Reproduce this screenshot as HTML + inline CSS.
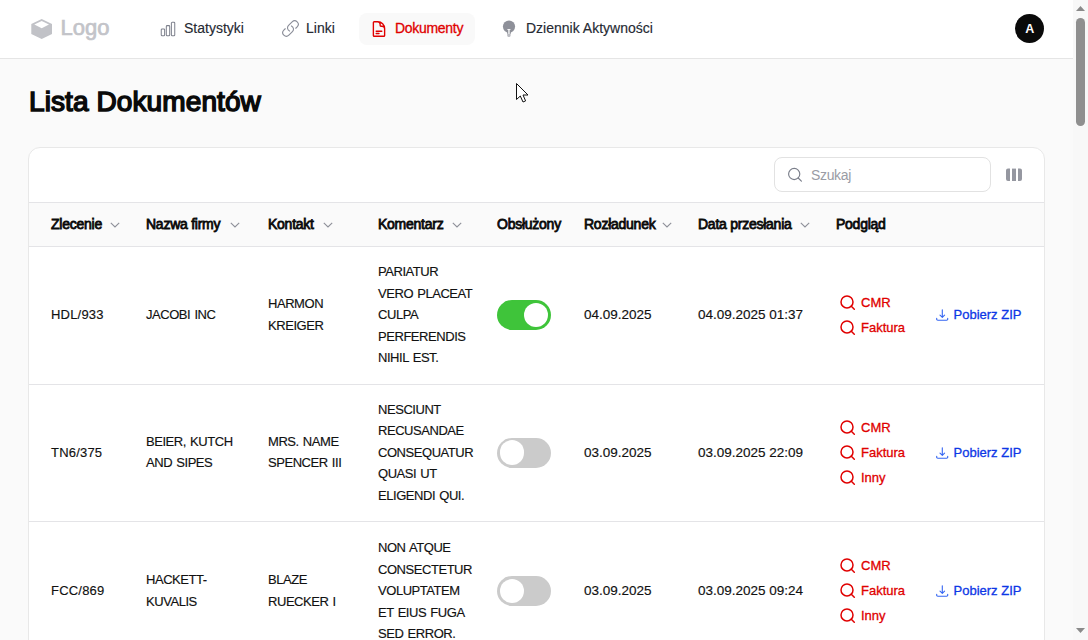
<!DOCTYPE html>
<html><head><meta charset="utf-8">
<style>
*{box-sizing:border-box;margin:0;padding:0}
html,body{width:1088px;height:640px;overflow:hidden}
body{background:#fafafa;font-family:"Liberation Sans",sans-serif;color:#0a0a0a;position:relative}
.a{position:absolute;white-space:nowrap}
.hdr{left:0;top:0;width:1073px;height:59px;background:#fff;border-bottom:1px solid #e5e5e5}
.nav{font-size:14px;line-height:16px;color:#262a33;top:20.4px;-webkit-text-stroke:0.15px #262a33}
.title{font-size:28px;font-weight:400;letter-spacing:0.1px;-webkit-text-stroke:1.5px #0a0a0a;line-height:32px;color:#0a0a0a}
.card{left:28px;top:147px;width:1017px;height:520px;background:#fff;border:1px solid #e8e8e8;border-radius:12px}
.thead{left:29px;top:202px;width:1015px;height:45px;background:#fafafa;border-top:1px solid #e4e4e7;border-bottom:1px solid #e4e4e7}
.rowb{left:29px;width:1015px;height:1px;background:#e4e4e7}
.th{font-size:14px;font-weight:400;letter-spacing:-0.25px;-webkit-text-stroke:0.8px #0a0a0a;line-height:16px;top:216px;color:#0a0a0a}
.td{font-size:13px;line-height:21.6px;color:#111;-webkit-text-stroke:0.15px #111}
.dg{letter-spacing:0.2px}
.dt{font-size:13.5px}
.up{letter-spacing:-0.45px;word-spacing:1px}
.chev{position:absolute;width:10px;height:6px}
.red{color:#e00000;font-size:13px;font-weight:400;-webkit-text-stroke:0.3px #e00000;line-height:16px}
.blue{color:#0d37e6;font-size:13px;line-height:16px;-webkit-text-stroke:0.3px #0d37e6}
.tog{position:absolute;width:54px;height:30px;border-radius:15px}
.tog .k{position:absolute;top:2.7px;width:24.6px;height:24.6px;border-radius:50%;background:#fff}
</style></head>
<body>
<!-- header -->
<div class="a hdr"></div>
<svg class="a" style="left:30px;top:17.6px" width="24" height="22" viewBox="0 0 24 22">
  <path d="M11.7 1 L22 6 L22 16 L11.7 21 L1.3 16 L1.3 6 Z" fill="#c1c2c7"/>
  <path d="M11.7 3 L19 6.6 L11.7 10.2 L4.3 6.6 Z" fill="#fff"/>
</svg>
<div class="a" style="left:60.5px;top:16px;font-size:22px;line-height:24px;font-weight:400;color:#c3c4c9;-webkit-text-stroke:0.7px #c3c4c9">Logo</div>

<svg class="a" style="left:159.2px;top:19.6px" width="18" height="18" viewBox="0 0 24 24" fill="none" stroke="#7d808c" stroke-width="1.35"><path d="M3 13.125C3 12.504 3.504 12 4.125 12h2.25c.621 0 1.125.504 1.125 1.125v6.75C7.5 20.496 6.996 21 6.375 21h-2.25A1.125 1.125 0 0 1 3 19.875v-6.75ZM9.75 8.625c0-.621.504-1.125 1.125-1.125h2.25c.621 0 1.125.504 1.125 1.125v11.25c0 .621-.504 1.125-1.125 1.125h-2.25a1.125 1.125 0 0 1-1.125-1.125V8.625ZM16.5 4.125c0-.621.504-1.125 1.125-1.125h2.25C20.496 3 21 3.504 21 4.125v15.75c0 .621-.504 1.125-1.125 1.125h-2.25a1.125 1.125 0 0 1-1.125-1.125V4.125Z"/></svg>
<div class="a nav" style="left:184px">Statystyki</div>

<svg class="a" style="left:280.6px;top:19.4px" width="19" height="19" viewBox="0 0 24 24" fill="none" stroke="#8a8d98" stroke-width="1.4" stroke-linecap="round" stroke-linejoin="round"><path d="M13.19 8.688a4.5 4.5 0 0 1 1.242 7.244l-4.5 4.5a4.5 4.5 0 0 1-6.364-6.364l1.757-1.757m13.35-.622 1.757-1.757a4.5 4.5 0 0 0-6.364-6.364l-4.5 4.5a4.5 4.5 0 0 0 1.242 7.244"/></svg>
<div class="a nav" style="left:306px">Linki</div>

<div class="a" style="left:359px;top:13px;width:116px;height:32px;border-radius:8px;background:#f9f9f9"></div>
<svg class="a" style="left:370px;top:19.7px" width="18" height="18" viewBox="0 0 24 24" fill="none" stroke="#e00000" stroke-width="1.85" stroke-linecap="round" stroke-linejoin="round"><path d="M19.5 14.25v-2.625a3.375 3.375 0 0 0-3.375-3.375h-1.5A1.125 1.125 0 0 1 13.5 7.125v-1.5a3.375 3.375 0 0 0-3.375-3.375H8.25m0 12.75h7.5m-7.5 3H12M10.5 2.25H5.625c-.621 0-1.125.504-1.125 1.125v17.25c0 .621.504 1.125 1.125 1.125h12.75c.621 0 1.125-.504 1.125-1.125V11.25a9 9 0 0 0-9-9Z"/></svg>
<div class="a nav" style="left:395px;color:#e00000;-webkit-text-stroke:0.3px #e00000;letter-spacing:-0.3px">Dokumenty</div>

<svg class="a" style="left:501px;top:19px" width="16" height="20" viewBox="0 0 16 20">
  <circle cx="8" cy="7.6" r="6.1" fill="#8e9099"/>
  <path d="M5.4 10 H10.6 L9.6 15 H6.4 Z" fill="#8e9099"/>
  <path d="M6.2 15 H9.6 V16.6 a1.3 1.3 0 0 1 -1.3 1.3 H7.5 a1.3 1.3 0 0 1 -1.3 -1.3 Z" fill="#b9bac0"/>
  <rect x="7.3" y="10.2" width="1.3" height="4.8" fill="#fff"/>
  <rect x="6.2" y="9.9" width="3.4" height="0.9" rx="0.4" fill="#fff"/>
</svg>
<div class="a nav" style="left:526px">Dziennik Aktywności</div>

<div class="a" style="left:1015px;top:14px;width:29px;height:29px;border-radius:50%;background:#0a0a0a;color:#fff;font-size:12.5px;font-weight:700;line-height:31px;text-align:center;padding-left:0.5px">A</div>

<!-- title -->
<div class="a title" style="left:29px;top:86px">Lista Dokumentów</div>

<!-- cursor -->
<svg class="a" style="left:515px;top:82px;z-index:5" width="16" height="22" viewBox="0 0 16 22">
  <path d="M1.5 1.5 V17.5 L5.3 14 L8 20 L10.6 18.9 L8 13 H13 Z" fill="#fff" stroke="#111" stroke-width="1" stroke-linejoin="round"/>
</svg>

<!-- card -->
<div class="a card"></div>
<div class="a" style="left:774px;top:157px;width:217px;height:35px;border:1px solid #e2e2e2;border-radius:8px;background:#fff"></div>
<svg class="a" style="left:785px;top:165px" width="20" height="20" viewBox="0 0 20 20" fill="none" stroke="#7a7e8a" stroke-width="1.15" stroke-linecap="round">
  <circle cx="9.2" cy="9" r="5.6"/>
  <path d="M13.2 13 L16.4 16.2"/>
</svg>
<div class="a" style="left:811px;top:166.6px;font-size:14px;line-height:16px;color:#9a9ca5;letter-spacing:-0.35px">Szukaj</div>
<svg class="a" style="left:1005px;top:168.4px" width="18" height="14" viewBox="0 0 18 14" fill="#9597a0">
  <path d="M1 2.6 a2 2 0 0 1 2 -2 H5 V13 H3 a2 2 0 0 1 -2 -2 Z"/>
  <rect x="7" y="0.6" width="4" height="12.4"/>
  <path d="M13 0.6 H15 a2 2 0 0 1 2 2 V11 a2 2 0 0 1 -2 2 H13 Z"/>
</svg>

<div class="a thead"></div>
<div class="a th" style="left:51px">Zlecenie</div>
<div class="a th" style="left:146px">Nazwa firmy</div>
<div class="a th" style="left:268px">Kontakt</div>
<div class="a th" style="left:378px">Komentarz</div>
<div class="a th" style="left:497px">Obsłużony</div>
<div class="a th" style="left:584px">Rozładunek</div>
<div class="a th" style="left:698px">Data przesłania</div>
<div class="a th" style="left:836px">Podgląd</div>
<svg class="chev" style="left:110px;top:222px" viewBox="0 0 10 6" fill="none" stroke="#8e9099" stroke-width="1.1"><path d="M0.8 0.8 L5 5 L9.2 0.8"/></svg>
<svg class="chev" style="left:230px;top:222px" viewBox="0 0 10 6" fill="none" stroke="#8e9099" stroke-width="1.1"><path d="M0.8 0.8 L5 5 L9.2 0.8"/></svg>
<svg class="chev" style="left:323px;top:222px" viewBox="0 0 10 6" fill="none" stroke="#8e9099" stroke-width="1.1"><path d="M0.8 0.8 L5 5 L9.2 0.8"/></svg>
<svg class="chev" style="left:452px;top:222px" viewBox="0 0 10 6" fill="none" stroke="#8e9099" stroke-width="1.1"><path d="M0.8 0.8 L5 5 L9.2 0.8"/></svg>
<svg class="chev" style="left:662px;top:222px" viewBox="0 0 10 6" fill="none" stroke="#8e9099" stroke-width="1.1"><path d="M0.8 0.8 L5 5 L9.2 0.8"/></svg>
<svg class="chev" style="left:800px;top:222px" viewBox="0 0 10 6" fill="none" stroke="#8e9099" stroke-width="1.1"><path d="M0.8 0.8 L5 5 L9.2 0.8"/></svg>

<div class="a rowb" style="top:384px"></div>
<div class="a rowb" style="top:521px"></div>

<!-- ROWS (generated below) -->
<div class="a td dg" style="left:51px;top:304.20px">HDL/933</div>
<div class="a td up" style="left:146px;top:304.20px">JACOBI INC</div>
<div class="a td up" style="left:268px;top:293.40px">HARMON<br>KREIGER</div>
<div class="a td up" style="left:378px;top:261.00px">PARIATUR<br>VERO PLACEAT<br>CULPA<br>PERFERENDIS<br>NIHIL EST.</div>
<div class="tog" style="left:497px;top:300.00px;background:#3fc43a"><div class="k" style="left:26.6px"></div></div>
<div class="a td dt" style="left:584px;top:304.20px">04.09.2025</div>
<div class="a td dt" style="left:698px;top:304.20px">04.09.2025 01:37</div>
<svg class="a" style="left:839px;top:293.50px" width="18" height="18" viewBox="0 0 18 18" fill="none" stroke="#e00000" stroke-width="1.5" stroke-linecap="round"><circle cx="8" cy="7.9" r="6.0"/><path d="M12.3 12.2 L15.3 15.2"/></svg>
<div class="a red" style="left:861px;top:294.50px">CMR</div>
<svg class="a" style="left:839px;top:318.50px" width="18" height="18" viewBox="0 0 18 18" fill="none" stroke="#e00000" stroke-width="1.5" stroke-linecap="round"><circle cx="8" cy="7.9" r="6.0"/><path d="M12.3 12.2 L15.3 15.2"/></svg>
<div class="a red" style="left:861px;top:319.50px">Faktura</div>
<svg class="a" style="left:934px;top:306.40px" width="16" height="16" viewBox="0 0 16 16" fill="none" stroke="#3566f2" stroke-width="1.1" stroke-linecap="round" stroke-linejoin="round"><path d="M8.3 3.8 V11.2 M6.0 9.2 L8.3 11.3 L10.6 9.2 M2.7 12.2 V13.2 a1.1 1.1 0 0 0 1.1 1.1 H12.6 a1.1 1.1 0 0 0 1.1 -1.1 V12.2"/></svg>
<div class="a blue" style="left:953.5px;top:307.00px">Pobierz ZIP</div>
<div class="a td dg" style="left:51px;top:441.70px">TN6/375</div>
<div class="a td up" style="left:146px;top:430.90px">BEIER, KUTCH<br>AND SIPES</div>
<div class="a td up" style="left:268px;top:430.90px">MRS. NAME<br>SPENCER III</div>
<div class="a td up" style="left:378px;top:398.50px">NESCIUNT<br>RECUSANDAE<br>CONSEQUATUR<br>QUASI UT<br>ELIGENDI QUI.</div>
<div class="tog" style="left:497px;top:437.50px;background:#cbcbcb"><div class="k" style="left:2.8px"></div></div>
<div class="a td dt" style="left:584px;top:441.70px">03.09.2025</div>
<div class="a td dt" style="left:698px;top:441.70px">03.09.2025 22:09</div>
<svg class="a" style="left:839px;top:418.50px" width="18" height="18" viewBox="0 0 18 18" fill="none" stroke="#e00000" stroke-width="1.5" stroke-linecap="round"><circle cx="8" cy="7.9" r="6.0"/><path d="M12.3 12.2 L15.3 15.2"/></svg>
<div class="a red" style="left:861px;top:419.50px">CMR</div>
<svg class="a" style="left:839px;top:443.50px" width="18" height="18" viewBox="0 0 18 18" fill="none" stroke="#e00000" stroke-width="1.5" stroke-linecap="round"><circle cx="8" cy="7.9" r="6.0"/><path d="M12.3 12.2 L15.3 15.2"/></svg>
<div class="a red" style="left:861px;top:444.50px">Faktura</div>
<svg class="a" style="left:839px;top:468.50px" width="18" height="18" viewBox="0 0 18 18" fill="none" stroke="#e00000" stroke-width="1.5" stroke-linecap="round"><circle cx="8" cy="7.9" r="6.0"/><path d="M12.3 12.2 L15.3 15.2"/></svg>
<div class="a red" style="left:861px;top:469.50px">Inny</div>
<svg class="a" style="left:934px;top:443.90px" width="16" height="16" viewBox="0 0 16 16" fill="none" stroke="#3566f2" stroke-width="1.1" stroke-linecap="round" stroke-linejoin="round"><path d="M8.3 3.8 V11.2 M6.0 9.2 L8.3 11.3 L10.6 9.2 M2.7 12.2 V13.2 a1.1 1.1 0 0 0 1.1 1.1 H12.6 a1.1 1.1 0 0 0 1.1 -1.1 V12.2"/></svg>
<div class="a blue" style="left:953.5px;top:444.50px">Pobierz ZIP</div>
<div class="a td dg" style="left:51px;top:580.20px">FCC/869</div>
<div class="a td up" style="left:146px;top:569.40px">HACKETT-<br>KUVALIS</div>
<div class="a td up" style="left:268px;top:569.40px">BLAZE<br>RUECKER I</div>
<div class="a td up" style="left:378px;top:537.00px">NON ATQUE<br>CONSECTETUR<br>VOLUPTATEM<br>ET EIUS FUGA<br>SED ERROR.</div>
<div class="tog" style="left:497px;top:576.00px;background:#cbcbcb"><div class="k" style="left:2.8px"></div></div>
<div class="a td dt" style="left:584px;top:580.20px">03.09.2025</div>
<div class="a td dt" style="left:698px;top:580.20px">03.09.2025 09:24</div>
<svg class="a" style="left:839px;top:557.00px" width="18" height="18" viewBox="0 0 18 18" fill="none" stroke="#e00000" stroke-width="1.5" stroke-linecap="round"><circle cx="8" cy="7.9" r="6.0"/><path d="M12.3 12.2 L15.3 15.2"/></svg>
<div class="a red" style="left:861px;top:558.00px">CMR</div>
<svg class="a" style="left:839px;top:582.00px" width="18" height="18" viewBox="0 0 18 18" fill="none" stroke="#e00000" stroke-width="1.5" stroke-linecap="round"><circle cx="8" cy="7.9" r="6.0"/><path d="M12.3 12.2 L15.3 15.2"/></svg>
<div class="a red" style="left:861px;top:583.00px">Faktura</div>
<svg class="a" style="left:839px;top:607.00px" width="18" height="18" viewBox="0 0 18 18" fill="none" stroke="#e00000" stroke-width="1.5" stroke-linecap="round"><circle cx="8" cy="7.9" r="6.0"/><path d="M12.3 12.2 L15.3 15.2"/></svg>
<div class="a red" style="left:861px;top:608.00px">Inny</div>
<svg class="a" style="left:934px;top:582.40px" width="16" height="16" viewBox="0 0 16 16" fill="none" stroke="#3566f2" stroke-width="1.1" stroke-linecap="round" stroke-linejoin="round"><path d="M8.3 3.8 V11.2 M6.0 9.2 L8.3 11.3 L10.6 9.2 M2.7 12.2 V13.2 a1.1 1.1 0 0 0 1.1 1.1 H12.6 a1.1 1.1 0 0 0 1.1 -1.1 V12.2"/></svg>
<div class="a blue" style="left:953.5px;top:583.00px">Pobierz ZIP</div>

<!-- scrollbar -->
<div class="a" style="left:1073px;top:0;width:15px;height:640px;background:#f8f8f8"></div>
<svg class="a" style="left:1073px;top:0" width="15" height="640">
  <path d="M3 11 L7.5 6 L12 11 Z" fill="#8a8a8a"/>
  <rect x="3" y="18" width="9" height="108" rx="4.5" fill="#8f8f8f"/>
  <path d="M3 628 L12 628 L7.5 633 Z" fill="#8a8a8a"/>
</svg>
</body></html>
